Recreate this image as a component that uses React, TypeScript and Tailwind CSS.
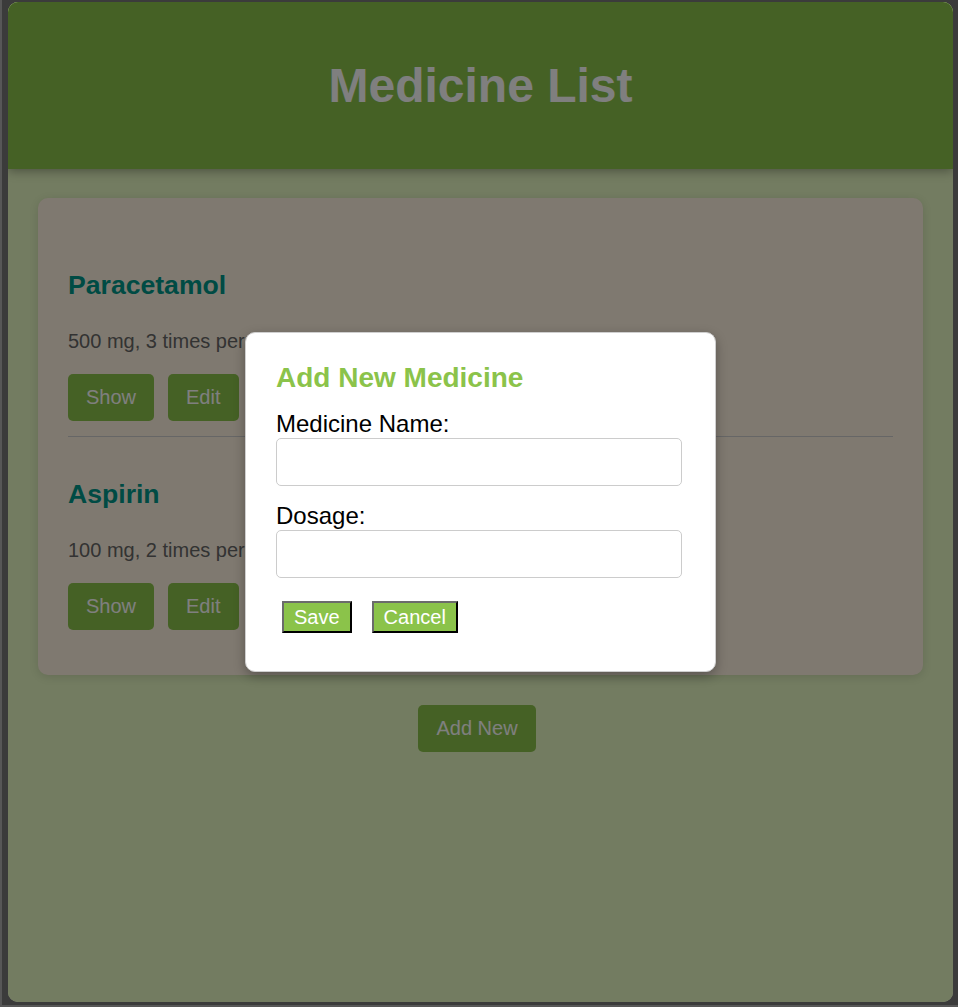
import React from "react";

const meds = [
  { name: "Paracetamol", dose: "500 mg, 3 times per day" },
  { name: "Aspirin", dose: "100 mg, 2 times per day" },
];

export default function App() {
  return (
    <div
      className="w-[958px] h-[1007px] bg-[#3b3b3b] border-l-2 border-b-2 border-[#575757] pt-[2px] pl-[6px] overflow-hidden"
      style={{ fontFamily: '"Liberation Sans", Arial, sans-serif' }}
    >
      <div className="relative w-[945px] h-[1000px] rounded-[10px] overflow-hidden bg-[#e6f8c2]">
        <header className="h-[167px] bg-[#8bc34a] flex items-center justify-center shadow-[0_2px_10px_rgba(0,0,0,0.35)] relative z-10">
          <h1 className="text-[48px] font-bold text-white leading-[55px]">Medicine List</h1>
        </header>

        <main className="px-[30px] pt-[29px]">
          <div className="bg-[#fff3e0] rounded-[10px] px-[30px] py-[30px] shadow-[0_2px_10px_rgba(0,0,0,0.12)]">
            {meds.map((m, i) => (
              <div
                key={m.name}
                className={
                  i < meds.length - 1
                    ? "pt-[15px] pb-[15px] border-b border-[#cccccc]"
                    : "pt-[15px] pb-[15px]"
                }
              >
                <h3 className="mt-[27px] text-[26.6px] leading-[31px] font-bold text-[#009688]">{m.name}</h3>
                <p className="mt-[29px] text-[20px] leading-[23px] text-[#666666]">{m.dose}</p>
                <div className="mt-[21px] flex gap-[14px]">
                  <button className="h-[47px] px-[18px] rounded-[5px] bg-[#8bc34a] text-white text-[20px] leading-[23px]">Show</button>
                  <button className="h-[47px] px-[18px] rounded-[5px] bg-[#8bc34a] text-white text-[20px] leading-[23px]">Edit</button>
                  <button className="h-[47px] px-[18px] rounded-[5px] bg-[#8bc34a] text-white text-[20px] leading-[23px]">Delete</button>
                </div>
              </div>
            ))}
          </div>
          <div className="mt-[30px] flex justify-center pr-[7px]">
            <button className="h-[47px] px-[18px] rounded-[5px] bg-[#8bc34a] text-white text-[20px] leading-[23px]">Add New</button>
          </div>
        </main>

        <div className="absolute inset-0 z-20 bg-black/50 flex items-center justify-center">
          <div className="w-[471px] bg-white rounded-[10px] border border-[#cfcfcf] shadow-[0_4px_12px_rgba(0,0,0,0.3)] pl-[30px] pt-[29px] pb-[38px]">
            <h2 className="text-[28px] leading-[32px] font-bold text-[#8bc34a]">Add New Medicine</h2>
            <label className="block mt-[16px] text-[24px] leading-[28px] text-black">Medicine Name:</label>
            <input className="block w-[406px] h-[48px] border border-[#cccccc] rounded-[5px] bg-white" />
            <label className="block mt-[16px] text-[24px] leading-[28px] text-black">Dosage:</label>
            <input className="block w-[406px] h-[48px] border border-[#cccccc] rounded-[5px] bg-white" />
            <div className="mt-[23px] ml-[6px] flex gap-[20px]">
              <button className="h-[32px] px-[10px] bg-[#8bc34a] text-white text-[20px] leading-[24px] border-2 border-t-[#6b6b6b] border-l-[#6b6b6b] border-r-black border-b-black">Save</button>
              <button className="h-[32px] px-[10px] bg-[#8bc34a] text-white text-[20px] leading-[24px] border-2 border-t-[#6b6b6b] border-l-[#6b6b6b] border-r-black border-b-black">Cancel</button>
            </div>
          </div>
        </div>
      </div>
    </div>
  );
}
